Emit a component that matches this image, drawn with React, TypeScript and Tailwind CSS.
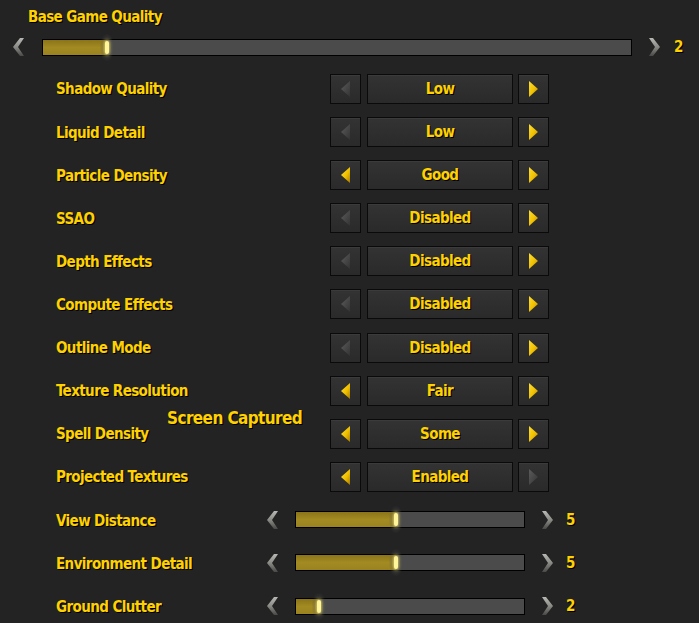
import React from "react";

const FONT = "'DejaVu Sans Condensed', 'DejaVu Sans', sans-serif";

function Chevron({ dir }: { dir: "left" | "right" }) {
  const id = `chev-${dir}`;
  const pts = dir === "left" ? "12,1 6,10 12,19 8,19 1,10 8,1" : "1,1 7,10 1,19 5,19 12,10 5,1";
  return (
    <svg width="13" height="20" viewBox="0 0 13 20" className="shrink-0">
      <defs>
        <linearGradient id={id} x1="0" y1="0" x2="0" y2="1">
          <stop offset="0" stopColor="#b8b8b4" />
          <stop offset="0.5" stopColor="#8a8a86" />
          <stop offset="1" stopColor="#484846" />
        </linearGradient>
      </defs>
      <polygon points={pts} fill={`url(#${id})`} />
    </svg>
  );
}

function Slider({ width, pct }: { width: number; pct: number }) {
  return (
    <div
      className="relative h-[17px] border border-black bg-[#4b4b4b] shrink-0"
      style={{ width }}
    >
      <div
        className="absolute left-0 top-0 bottom-0 bg-gradient-to-b from-[#8a7418] via-[#a38b22] to-[#9a8320]"
        style={{ width: `${pct}%` }}
      />
      <div
        className="absolute top-[-6px] h-[27px] w-[14px] -ml-[7px] rounded-full"
        style={{
          left: `${pct}%`,
          background:
            "radial-gradient(ellipse at center, rgba(150,150,140,0.5) 0%, rgba(80,80,80,0.35) 45%, rgba(40,40,40,0) 75%)",
        }}
      />
      <div
        className="absolute top-[1px] h-[13px] w-[4px] -ml-[2px] rounded-full bg-[#fff59a]"
        style={{ left: `${pct}%`, boxShadow: "0 0 3px 1px rgba(240,220,90,0.7)" }}
      />
    </div>
  );
}

function Tri({ dir, on }: { dir: "left" | "right"; on: boolean }) {
  const id = `tri-${dir}-${on ? 1 : 0}`;
  const pts = dir === "left" ? "9,0 0,8 9,16" : "0,0 9,8 0,16";
  return (
    <svg width="9" height="16" viewBox="0 0 9 16">
      <defs>
        <linearGradient id={id} x1="0" y1="0" x2="1" y2="1">
          {on ? (
            <>
              <stop offset="0" stopColor="#ffe030" />
              <stop offset="0.55" stopColor="#f0c000" />
              <stop offset="1" stopColor="#a87a00" />
            </>
          ) : (
            <>
              <stop offset="0" stopColor="#5c5c5c" />
              <stop offset="1" stopColor="#333333" />
            </>
          )}
        </linearGradient>
      </defs>
      <polygon points={pts} fill={`url(#${id})`} />
    </svg>
  );
}

const btn =
  "h-[30px] border border-[#0a0a0a] bg-gradient-to-b from-[#333333] to-[#2a2a2a] flex items-center justify-center shadow-[inset_0_1px_0_rgba(255,255,255,0.04)]";

const gold = "text-[#ffd100] font-bold [text-shadow:1px_1px_0_#000] tracking-[-0.6px]";

const dropdowns: { label: string; value: string; left: boolean; right: boolean }[] = [
  { label: "Shadow Quality", value: "Low", left: false, right: true },
  { label: "Liquid Detail", value: "Low", left: false, right: true },
  { label: "Particle Density", value: "Good", left: true, right: true },
  { label: "SSAO", value: "Disabled", left: false, right: true },
  { label: "Depth Effects", value: "Disabled", left: false, right: true },
  { label: "Compute Effects", value: "Disabled", left: false, right: true },
  { label: "Outline Mode", value: "Disabled", left: false, right: true },
  { label: "Texture Resolution", value: "Fair", left: true, right: true },
  { label: "Spell Density", value: "Some", left: true, right: true },
  { label: "Projected Textures", value: "Enabled", left: true, right: false },
];

const sliders = [
  { label: "View Distance", pct: 44, value: "5" },
  { label: "Environment Detail", pct: 44, value: "5" },
  { label: "Ground Clutter", pct: 10, value: "2" },
];

export default function App() {
  return (
    <div
      className="relative w-[699px] h-[623px] bg-[#232323] overflow-hidden text-[15px] leading-none"
      style={{ fontFamily: FONT }}
    >
      <div className={`h-[34px] pl-[28px] pt-[1px] flex items-center ${gold}`}>Base Game Quality</div>
      <div className="h-[26px] flex items-center pl-[12px]">
        <Chevron dir="left" />
        <div className="ml-[17px]">
          <Slider width={590} pct={10.8} />
        </div>
        <div className="ml-[16px]">
          <Chevron dir="right" />
        </div>
        <div className={`ml-[13px] pt-[1px] ${gold}`}>2</div>
      </div>
      <div className="mt-[7.4px] pl-[56px]">
        {dropdowns.map((d) => (
          <div key={d.label} className="h-[43.1px] flex items-center">
            <div className={`w-[274px] pt-[2px] ${gold}`}>{d.label}</div>
            <div className={`${btn} w-[31px]`}>
              <Tri dir="left" on={d.left} />
            </div>
            <div className={`${btn} w-[146px] ml-[6px] pt-[1px] ${gold}`}>{d.value}</div>
            <div className={`${btn} w-[31px] ml-[5px]`}>
              <Tri dir="right" on={d.right} />
            </div>
          </div>
        ))}
        {sliders.map((s) => (
          <div key={s.label} className="h-[43.1px] flex items-center">
            <div className={`w-[210px] pt-[3px] ${gold}`}>{s.label}</div>
            <Chevron dir="left" />
            <div className="ml-[16px]">
              <Slider width={230} pct={s.pct} />
            </div>
            <div className="ml-[16px]">
              <Chevron dir="right" />
            </div>
            <div className={`ml-[12px] pt-[1px] ${gold}`}>{s.value}</div>
          </div>
        ))}
      </div>
      <div className={`absolute left-[167px] top-[410px] text-[17px] ${gold}`}>Screen Captured</div>
    </div>
  );
}
